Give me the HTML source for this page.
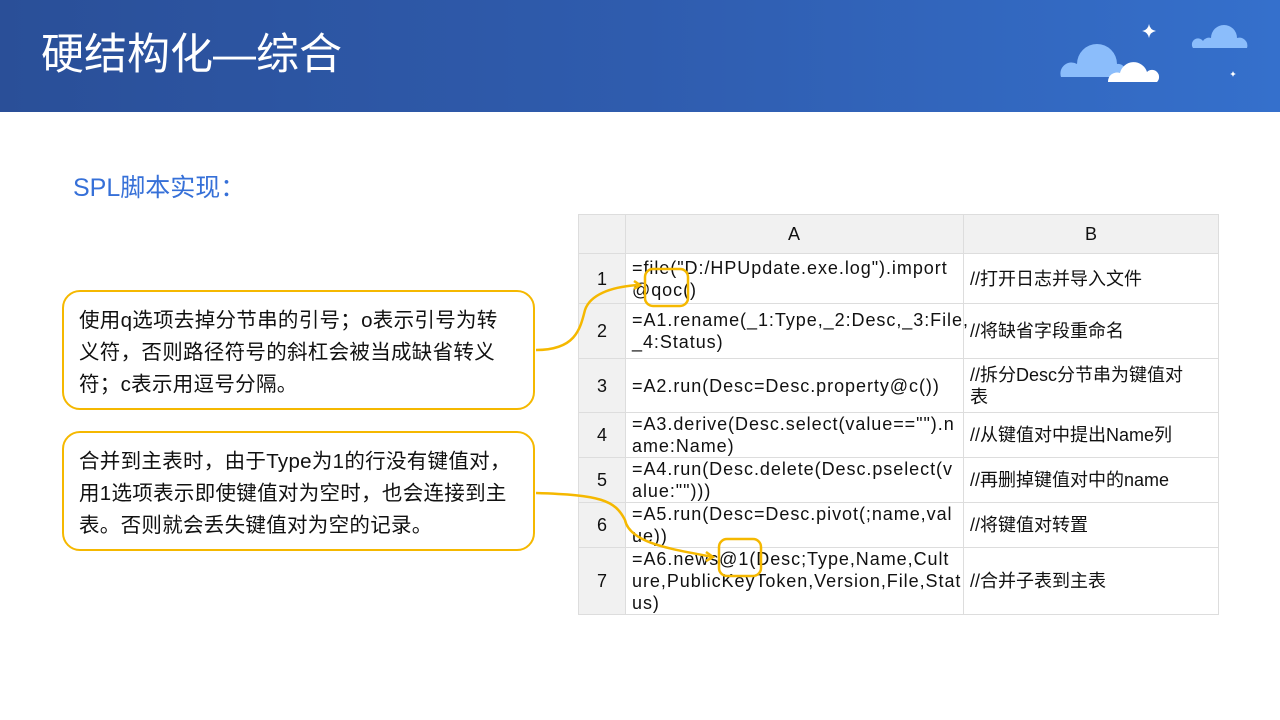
<!DOCTYPE html>
<html><head><meta charset="utf-8"><style>
*{margin:0;padding:0;box-sizing:border-box}
body{width:1280px;height:720px;position:relative;background:#fff;font-family:"Liberation Sans","Noto Sans CJK SC",sans-serif;overflow:hidden}
.hdr{position:absolute;left:0;top:0;width:1280px;height:112px;background:linear-gradient(90deg,#2a4f98 0%,#2f5cae 50%,#3570cc 100%)}
.title{position:absolute;left:41px;top:29px;color:#fff;font-size:43px;line-height:52px}
.sub{position:absolute;left:73px;top:168px;color:#3670d8;font-size:25px}
.box{position:absolute;left:62px;width:473px;height:120px;border:2px solid #f5b800;border-radius:18px;font-size:20.5px;line-height:32px;padding:13px 0 0 15px;color:#111;white-space:nowrap;letter-spacing:0.3px}
table{position:absolute;left:578px;top:214px;width:640px;table-layout:fixed;border-collapse:collapse;font-size:18px;color:#111}
td{border:1px solid #ddd;vertical-align:middle;line-height:22px;padding:0 6px;white-space:nowrap;overflow:visible}
td.a{letter-spacing:0.95px}
td.n{background:#f1f1f1;text-align:center}
tr.h td{background:#f1f1f1;text-align:center;height:39px}
</style></head><body>
<div class="hdr">
<div class="title">硬结构化—综合</div>
<svg width="1280" height="112" style="position:absolute;left:0;top:0">
<path d="M1061 77 A11 11 0 0 1 1077 64 A20 20 0 0 1 1117 64 A8 8 0 0 1 1126 72 L1126 77 Z" fill="#8bbdfb"/>
<path d="M1108 82 A9 9 0 0 1 1120 73 A14 14 0 0 1 1147 72 A7 7 0 0 1 1157 82 Z" fill="#fff"/>
<path d="M1193 48 A6 6 0 0 1 1203 41 A7 7 0 0 1 1211 38 A13 13 0 0 1 1237 38 A8 8 0 0 1 1247 48 Z" fill="#8bbdfb"/>
<path d="M1149 24 q1 6 7 7 q-6 1 -7 7 q-1 -6 -7 -7 q6 -1 7 -7z" fill="#fff"/>
<path d="M1233 71 q0.5 2.5 3 3 q-2.5 0.5 -3 3 q-0.5 -2.5 -3 -3 q2.5 -0.5 3 -3z" fill="#fff"/>
</svg>
</div>
<div class="sub">SPL脚本实现：</div>
<div class="box" style="top:290px">使用q选项去掉分节串的引号；o表示引号为转<br>义符，否则路径符号的斜杠会被当成缺省转义<br>符；c表示用逗号分隔。</div>
<div class="box" style="top:431px">合并到主表时，由于Type为1的行没有键值对，<br>用1选项表示即使键值对为空时，也会连接到主<br>表。否则就会丢失键值对为空的记录。</div>
<table>
<colgroup><col style="width:47px"><col style="width:338px"><col style="width:255px"></colgroup>
<tr class="h"><td class="n"></td><td class="a" style="text-align:center">A</td><td class="b" style="text-align:center">B</td></tr>
<tr style="height:50px"><td class="n">1</td><td class="a">=file("D:/HPUpdate.exe.log").import<br>@qoc()</td><td class="b">//打开日志并导入文件</td></tr>
<tr style="height:55px"><td class="n">2</td><td class="a">=A1.rename(_1:Type,_2:Desc,_3:File,<br>_4:Status)</td><td class="b">//将缺省字段重命名</td></tr>
<tr style="height:54px"><td class="n">3</td><td class="a">=A2.run(Desc=Desc.property@c())</td><td class="b">//拆分Desc分节串为键值对<br>表</td></tr>
<tr style="height:45px"><td class="n">4</td><td class="a">=A3.derive(Desc.select(value=="").n<br>ame:Name)</td><td class="b">//从键值对中提出Name列</td></tr>
<tr style="height:45px"><td class="n">5</td><td class="a">=A4.run(Desc.delete(Desc.pselect(v<br>alue:"")))</td><td class="b">//再删掉键值对中的name</td></tr>
<tr style="height:45px"><td class="n">6</td><td class="a">=A5.run(Desc=Desc.pivot(;name,val<br>ue))</td><td class="b">//将键值对转置</td></tr>
<tr style="height:66px"><td class="n">7</td><td class="a">=A6.news@1(Desc;Type,Name,Cult<br>ure,PublicKeyToken,Version,File,Stat<br>us)</td><td class="b">//合并子表到主表</td></tr>
</table>
<svg width="1280" height="720" style="position:absolute;left:0;top:0" fill="none" stroke="#f5b800" stroke-width="2.5">
<path d="M536 350 C575 350 580 330 585 310 C590 295 610 287 638 285"/>
<path d="M634 281 l6 4 l-6 4" />
<rect x="645" y="269" width="43" height="37" rx="8"/>
<path d="M536 493 C600 495 615 500 625 520 C630 545 680 550 712 557"/>
<path d="M706 552 l7 5 l-7 4"/>
<rect x="719" y="539" width="42" height="37" rx="8"/>
</svg>
</body></html>
